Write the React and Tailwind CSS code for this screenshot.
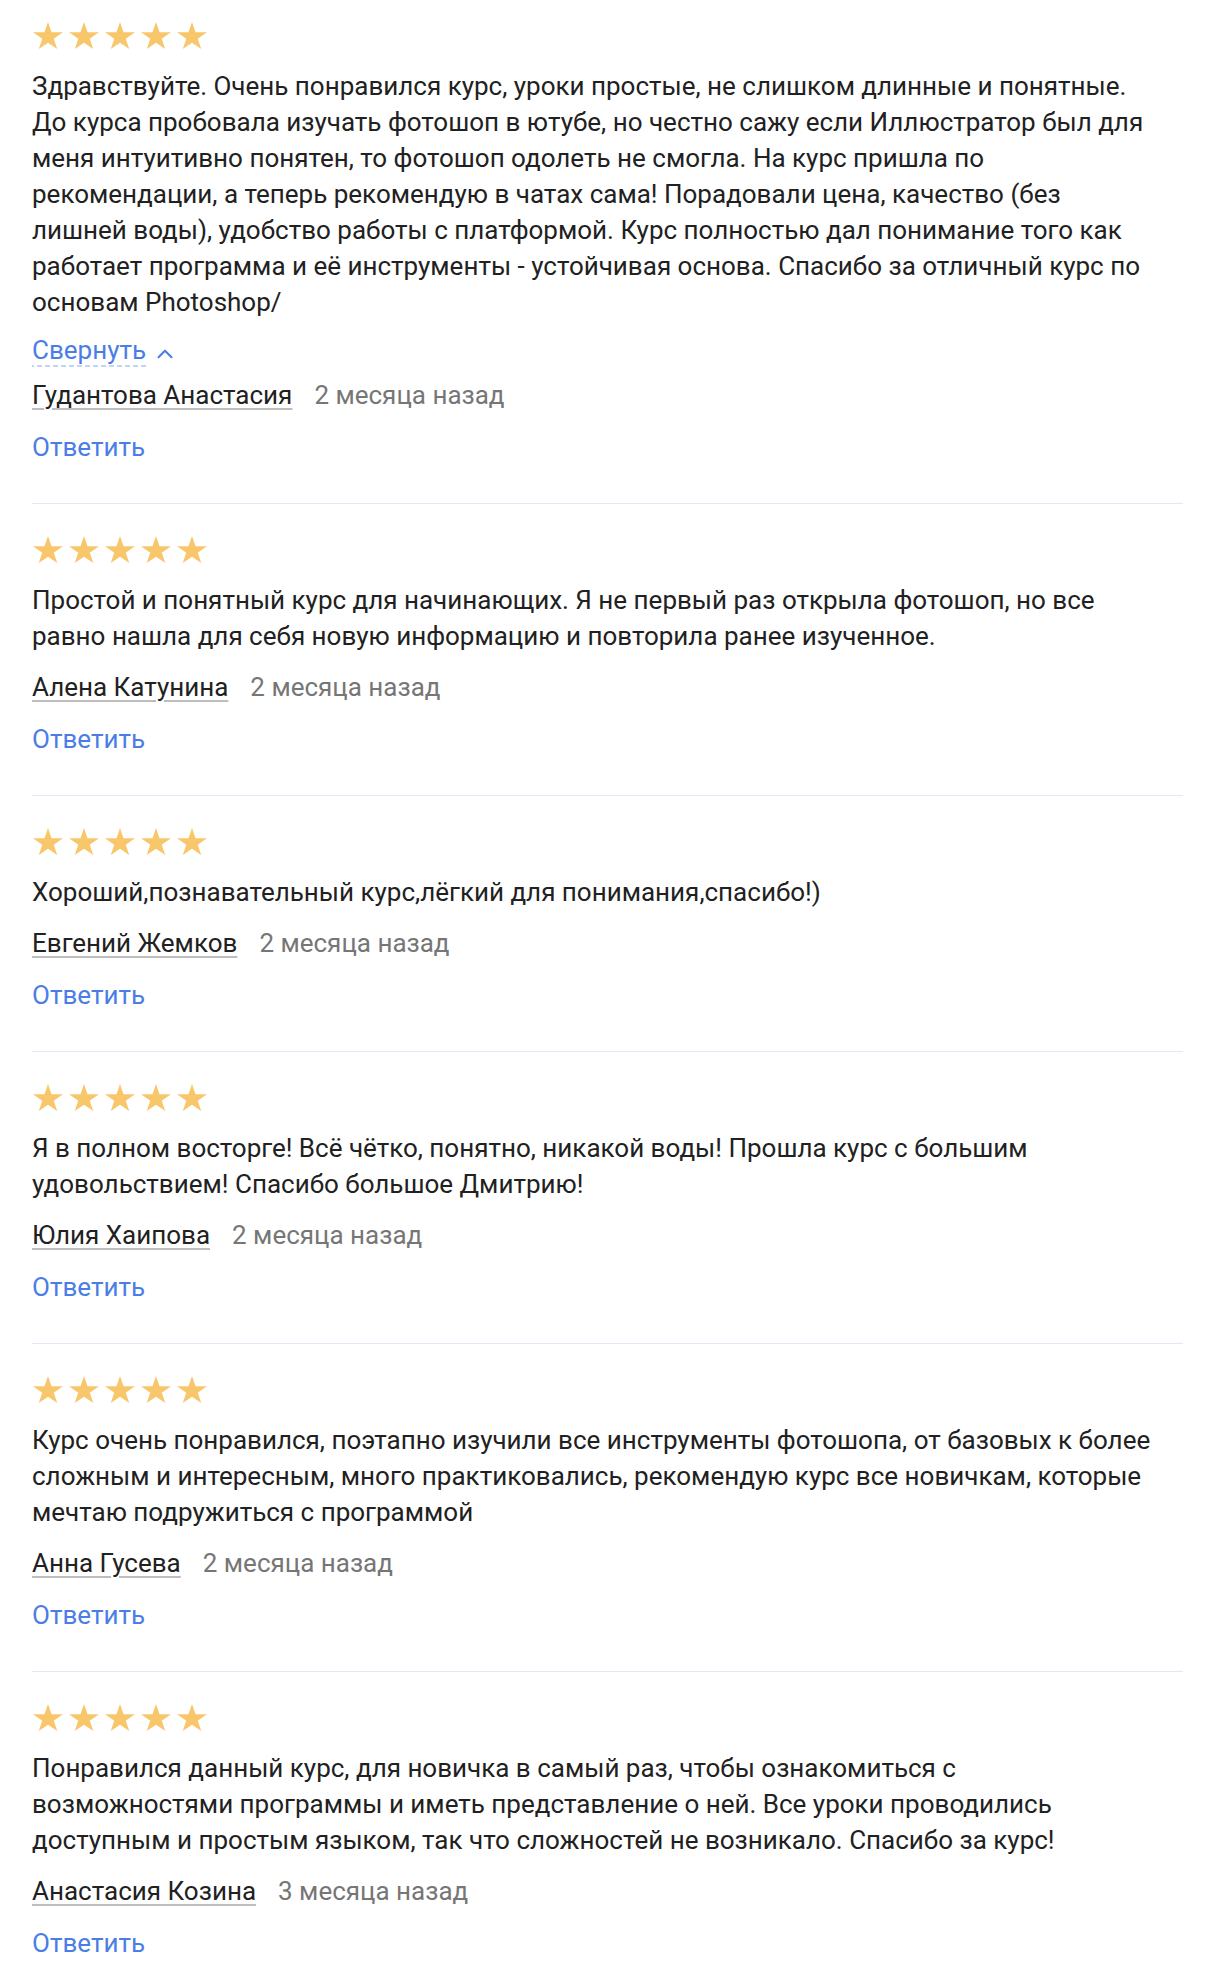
import { ChevronUp } from 'lucide-react'

const reviews = [
  {
    text: 'Здравствуйте. Очень понравился курс, уроки простые, не слишком длинные и понятные. До курса пробовала изучать фотошоп в ютубе, но честно сажу если Иллюстратор был для меня интуитивно понятен, то фотошоп одолеть не смогла. На курс пришла по рекомендации, а теперь рекомендую в чатах сама! Порадовали цена, качество (без лишней воды), удобство работы с платформой. Курс полностью дал понимание того как работает программа и её инструменты - устойчивая основа. Спасибо за отличный курс по основам Photoshop/',
    name: 'Гудантова Анастасия',
    date: '2 месяца назад',
    expanded: true,
  },
  {
    text: 'Простой и понятный курс для начинающих. Я не первый раз открыла фотошоп, но все равно нашла для себя новую информацию и повторила ранее изученное.',
    name: 'Алена Катунина',
    date: '2 месяца назад',
  },
  {
    text: 'Хороший,познавательный курс,лёгкий для понимания,спасибо!)',
    name: 'Евгений Жемков',
    date: '2 месяца назад',
  },
  {
    text: 'Я в полном восторге! Всё чётко, понятно, никакой воды! Прошла курс с большим удовольствием! Спасибо большое Дмитрию!',
    name: 'Юлия Хаипова',
    date: '2 месяца назад',
  },
  {
    text: 'Курс очень понравился, поэтапно изучили все инструменты фотошопа, от базовых к более сложным и интересным, много практиковались, рекомендую курс все новичкам, которые мечтаю подружиться с программой',
    name: 'Анна Гусева',
    date: '2 месяца назад',
  },
  {
    text: 'Понравился данный курс, для новичка в самый раз, чтобы ознакомиться с возможностями программы и иметь представление о ней. Все уроки проводились доступным и простым языком, так что сложностей не возникало. Спасибо за курс!',
    name: 'Анастасия Козина',
    date: '3 месяца назад',
  },
]

function Star() {
  return (
    <svg viewBox="0 0 30 27" className="w-[30px] h-[27px] shrink-0" fill="#f8c76b">
      <polygon points="15,0 18.54,10.31 30,10.31 20.73,16.69 24.27,27 15,20.63 5.73,27 9.27,16.69 0,10.31 11.46,10.31" />
    </svg>
  )
}

function Review({ review, last }) {
  return (
    <div className={`${last ? '' : 'border-b border-[#e7e5f7]'} pb-[38px] pt-[32px] first:pt-[22px]`}>
      {/* рейтинг */}
      <div className="flex gap-[6px] ml-[1px]">
        {[0, 1, 2, 3, 4].map((i) => (
          <Star key={i} />
        ))}
      </div>

      <p className="mt-[19px] pr-[26px] text-[#212121]">{review.text}</p>

      {review.expanded && (
        <div className="mt-[15px] flex items-center gap-[6px] text-[#4a7ee6]">
          <span className="leading-[30px] pb-[2px] bg-[linear-gradient(to_right,#c3d5f7_5px,transparent_5px)] bg-[length:8px_2px] bg-bottom bg-repeat-x">
            Свернуть
          </span>
          <ChevronUp className="w-[26px] h-[26px] mt-[5px]" strokeWidth={1.9} />
        </div>
      )}

      <div className={`${review.expanded ? 'mt-[10px]' : 'mt-[15px]'} flex gap-[22px]`}>
        <span className="text-[#212121] underline decoration-2 decoration-[#bdbdbd] underline-offset-[4px]">
          {review.name}
        </span>
        <span className="text-[#767676]">{review.date}</span>
      </div>

      <div className="mt-[16px]">
        <button className="text-[#4a7ee6] leading-[36px]">Ответить</button>
      </div>
    </div>
  )
}

export default function App() {
  return (
    <div className="min-h-screen bg-white pl-[32px] pr-[23px] font-['Roboto',sans-serif] text-[26px] leading-[36px]">
      {reviews.map((r, i) => (
        <Review key={i} review={r} last={i === reviews.length - 1} />
      ))}
    </div>
  )
}
